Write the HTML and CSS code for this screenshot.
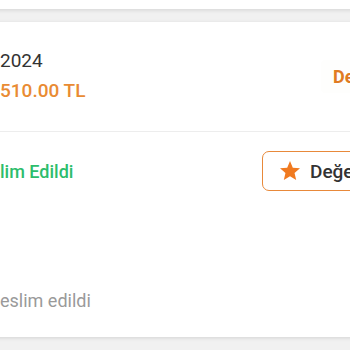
FILE: index.html
```html
<!DOCTYPE html>
<html lang="tr">
<head>
<meta charset="utf-8">
<title>Siparişlerim</title>
<link rel="stylesheet" href="styles.css">
</head>
<body>
<div class="list">
  <div class="card card-prev"></div>
  <div class="card">
    <div class="head">
      <div class="info">
        <div class="date">2024</div>
        <div class="price">510.00 TL</div>
      </div>
      <a class="detail">Detaylar</a>
    </div>
    <div class="status-row">
      <div class="status">lim Edildi</div>
      <button class="rate" type="button">
        <svg class="star" viewBox="0 0 24 24" width="24" height="24" aria-hidden="true"><path d="M12 17.27L18.18 21l-1.64-7.03L22 9.24l-7.19-.61L12 2 9.19 8.63 2 9.24l5.46 4.73L5.82 21z"/></svg>
        <span>Değerlendir</span>
      </button>
    </div>
    <div class="note">eslim edildi</div>
  </div>
</div>
</body>
</html>
```
FILE: styles.css
```css
html, body {
  margin: 0;
  padding: 0;
  overflow: hidden;
  background: #f1f1f1;
}
body {
  width: 350px;
  height: 350px;
  font-family: Roboto, "Noto Sans", sans-serif;
}
.list {
  width: 520px;
  margin-left: -16px;
  display: flex;
  flex-direction: column;
  gap: 13px;
}
.card {
  background: #fff;
  box-shadow: 0 1px 4px rgba(0, 0, 0, 0.13);
  padding-left: 16px;
}
.card-prev {
  height: 9px;
}
.head {
  display: flex;
  align-items: center;
  padding: 27px 0 28px;
  border-bottom: 1px solid #ededed;
}
.info {
  width: 305px;
  display: flex;
  flex-direction: column;
}
.date {
  font-size: 19px;
  line-height: 24px;
  color: #333;
}
.price {
  margin-top: 6px;
  font-size: 19px;
  line-height: 24px;
  font-weight: 500;
  color: #e98b33;
}
.detail {
  margin-left: 16px;
  padding: 6px 12px;
  background: #fefefd;
  border-radius: 4px;
  font-family: Roboto, sans-serif;
  font-size: 18px;
  font-weight: 700;
  color: #e07b22;
}
.status-row {
  display: flex;
  align-items: center;
  padding-top: 19px;
}
.status {
  width: 262px;
  font-size: 18px;
  font-weight: 500;
  color: #2dbd6c;
}
.rate {
  display: flex;
  align-items: center;
  gap: 8px;
  height: 40px;
  padding: 0 16px 0 15px;
  border: 1.5px solid #e8893a;
  border-radius: 7px;
  background: #fff;
  font-family: Roboto, sans-serif;
  font-size: 19px;
  font-weight: 500;
  color: #333;
  white-space: nowrap;
}
.star {
  fill: #f07a20;
  flex: none;
}
.note {
  margin-top: 98px;
  padding-bottom: 24px;
  font-size: 18px;
  line-height: 24px;
  color: #9a9a9a;
}
```
